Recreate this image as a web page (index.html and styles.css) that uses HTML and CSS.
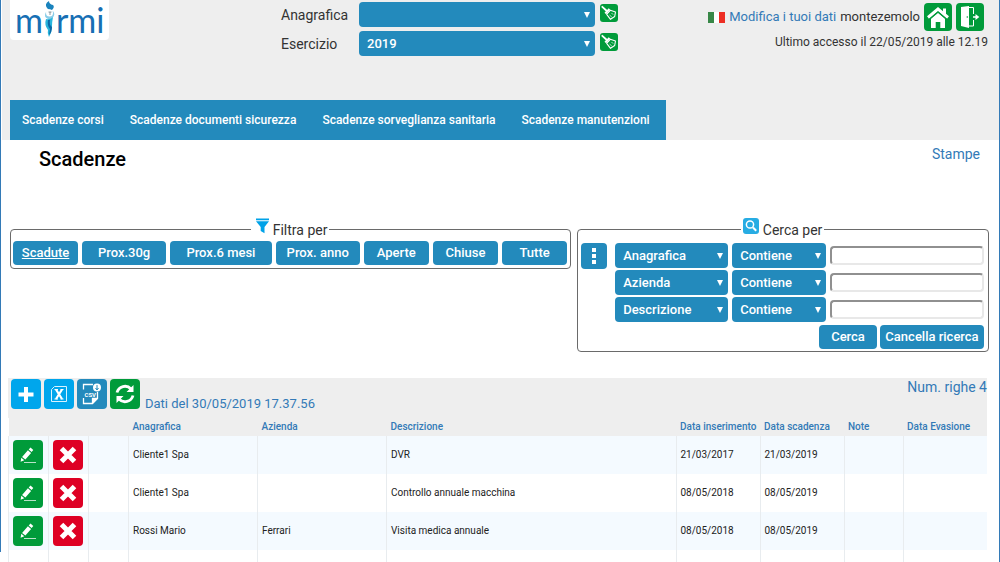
FILE: index.html
```html
<!DOCTYPE html>
<html lang="it">
<head>
<meta charset="utf-8">
<title>Scadenze</title>
<link rel="stylesheet" href="styles.css">
</head>
<body>
<svg class="sprite" aria-hidden="true">
  <symbol id="broom" viewBox="0 0 18 18"><path d="M2.300 2.800l4 3.700" fill="none" stroke="#fff" stroke-width="1.800" stroke-linecap="round"/><path d="M8.700 4.300l1.600 1.500-4.200 4.400-1.600-1.500z" fill="#fff"/><path d="M10.300 6.300l5.200 1.700-.8 4.500-4.200 2.800-3.800-5z" fill="none" stroke="#fff" stroke-width="1.100" stroke-linejoin="round"/><path d="M9.500 11l2.300 2M11.500 9l1.700 1.700" fill="none" stroke="#fff" stroke-width=".7"/></symbol>
  <symbol id="pencil" viewBox="0 0 30 30"><path d="M17.500 7.500l2.800 2.500-1.700 2-2.900-2.500zM14.900 10.200l3.200 2.700-5.700 6.700-3.300-2.700zM8.300 17.700l3 2.600-3.700 1.500z" fill="#fff"/><path d="M11 22.500h12" stroke="#b9e3c8"/></symbol>
  <symbol id="cross" viewBox="0 0 30 30"><path d="M8.500 8.500l13 13M21.500 8.500l-13 13" stroke="#fff" stroke-width="5"/></symbol>
</svg>
<div class="page">
  <header class="header">
    <div class="header-top">
      <div class="logo" aria-label="mirmi"><span>m</span><svg width="13" height="38" viewBox="0 0 13 38"><path d="M4 8Q1 4 6 1q0 3 4 4 2 2-1 5L5 9z" fill="#1a83bd"/><path d="M3 12Q0 17 5 19l2 2 2-3q4-3 1-7z" fill="#8acde8"/><circle cx="6.500" cy="13" r="3.500" fill="#fff"/><path d="M5.500 12h3M7 12v3" stroke="#596d78" stroke-width=".7"/><path d="M3 19q4 1 7-2-1 5-1 9 0 6-3 11-2-4-1-7-4-5-2-11z" fill="#28b4dc"/><path d="M5 20q-1 6 2 9l-1 6q3-3 3-8-3-2-2-7z" fill="#0b69a7"/></svg><span>rmi</span></div>
      <form class="context">
        <label for="anagrafica">Anagrafica</label>
        <select id="anagrafica" class="select"><option></option></select>
        <button type="button" class="clear" aria-label="Pulisci anagrafica"><svg width="18" height="18"><use href="#broom"/></svg></button>
        <label for="esercizio">Esercizio</label>
        <select id="esercizio" class="select"><option>2019</option></select>
        <button type="button" class="clear" aria-label="Pulisci esercizio"><svg width="18" height="18"><use href="#broom"/></svg></button>
      </form>
      <div class="account">
        <div class="account-row">
          <span class="flag"></span>
          <a href="#">Modifica i tuoi dati</a>
          <span>montezemolo</span>
          <button type="button" class="square green" aria-label="Home"><svg width="28" height="28" viewBox="0 0 28 28"><path d="M4 14.500L14 6l10 8.500" fill="none" stroke="#fff" stroke-width="3"/><path d="M19 5.500h3V12l-3-2.500zM7 15.500L14 9.700l7 5.800V25h-4.700v-6h-4.600v6H7z" fill="#fff"/><path d="M5.500 16.200L14 9l8.500 7.200" fill="none" stroke="#009b3a" stroke-width="1.200"/></svg></button>
          <button type="button" class="square green" aria-label="Esci"><svg width="28" height="28" viewBox="0 0 28 28"><path d="M5 4l8-1v22l-8-2z" fill="#fff"/><path d="M13 4.500h4.500V11M17.500 17v6H13" fill="none" stroke="#fff"/><path d="M17 13.200h2.500V11l3.800 3-3.800 3v-2.200H17z" fill="#fff"/><circle cx="11.300" cy="14" r=".8" fill="#009b3a"/></svg></button>
        </div>
        <div class="access">Ultimo accesso il 22/05/2019 alle 12.19</div>
      </div>
    </div>
    <nav class="nav">
      <a href="#">Scadenze corsi</a>
      <a href="#">Scadenze documenti sicurezza</a>
      <a href="#">Scadenze sorveglianza sanitaria</a>
      <a href="#">Scadenze manutenzioni</a>
    </nav>
  </header>
  <main>
    <div class="title-row"><h1>Scadenze</h1><a href="#">Stampe</a></div>
    <div class="panels">
      <fieldset class="panel filter">
        <legend><svg width="13" height="16" viewBox="0 0 13 16"><path d="M0 .5h13v1.800H0zM0 3.300h13L8.500 9v6.200L4.700 13V9z" fill="#00a2e8"/></svg>Filtra per</legend>
        <div class="filters">
          <button type="button" class="btn active">Scadute</button>
          <button type="button" class="btn wide">Prox.30g</button>
          <button type="button" class="btn widest">Prox.6 mesi</button>
          <button type="button" class="btn wide">Prox. anno</button>
          <button type="button" class="btn">Aperte</button>
          <button type="button" class="btn">Chiuse</button>
          <button type="button" class="btn">Tutte</button>
        </div>
      </fieldset>
      <fieldset class="panel search">
        <legend><svg width="16" height="16" viewBox="0 0 16 16"><rect width="16" height="16" rx="3" fill="#27ace3"/><circle cx="7" cy="6.500" r="3.600" fill="none" stroke="#fff" stroke-width="1.500"/><path d="M10 9.500l3.200 3.300" stroke="#fff" stroke-width="2"/></svg>Cerca per</legend>
        <div class="search-body">
          <button type="button" class="more" aria-label="Altri criteri"><svg width="26" height="26" viewBox="0 0 26 26"><path d="M11 5h4v4h-4zM11 11h4v4h-4zM11 17h4v4h-4z" fill="#fff"/></svg></button>
          <div class="criteria">
            <select class="select" aria-label="Campo 1"><option>Anagrafica</option></select>
            <select class="select" aria-label="Operatore 1"><option>Contiene</option></select>
            <input type="text" aria-label="Valore 1">
            <select class="select" aria-label="Campo 2"><option>Azienda</option></select>
            <select class="select" aria-label="Operatore 2"><option>Contiene</option></select>
            <input type="text" aria-label="Valore 2">
            <select class="select" aria-label="Campo 3"><option>Descrizione</option></select>
            <select class="select" aria-label="Operatore 3"><option>Contiene</option></select>
            <input type="text" aria-label="Valore 3">
          </div>
        </div>
        <div class="actions"><button type="button" class="btn short">Cerca</button><button type="button" class="btn long">Cancella ricerca</button></div>
      </fieldset>
    </div>
    <section class="results">
      <div class="toolbar">
        <button type="button" class="tool sky" aria-label="Aggiungi"><svg width="30" height="30" viewBox="0 0 30 30"><path d="M15 8v15M7.500 15.500h15" stroke="#fff" stroke-width="4"/></svg></button>
        <button type="button" class="tool sky" aria-label="Esporta Excel"><svg width="30" height="30" viewBox="0 0 30 30"><path d="M10.500 7.500h12v15h-15v-12z" fill="none" stroke="#d8f2ff"/><path d="M12 10.500l6 9.500M18 10.500L12 20" stroke="#fff" stroke-width="2.200"/><path d="M10.500 10.500h3.500M16.500 10.500h3M10.500 20h3.500M16.500 20h3" stroke="#fff"/></svg></button>
        <button type="button" class="tool blue" aria-label="Esporta CSV"><svg width="30" height="30" viewBox="0 0 30 30"><path d="M16 5.500H6.500v5M6.500 19v5.500h9l5-5V13M15.500 24v-4.500h5" fill="none" stroke="#fff" stroke-width="1.300"/><path d="M15.500 19.500h5l-5 5z" fill="#fff"/><circle cx="20" cy="8.500" r="4" fill="#fff"/><path d="M20 6v4.500M18.500 9l1.500 2 1.500-2" stroke="#238abc" fill="none"/><text x="7.500" y="17.500" class="csv">CSV</text></svg></button>
        <button type="button" class="tool green" aria-label="Aggiorna"><svg width="30" height="30" viewBox="0 0 30 30"><g fill="none" stroke="#fff" stroke-width="2.800"><path d="M7 13.500a8.200 8.200 0 0 1 14-3.500"/><path d="M23 16.500a8.200 8.200 0 0 1-14 3.500"/></g><path d="M23.500 6v7h-7zM6.500 24v-7h7z" fill="#fff"/></svg></button>
        <span class="stamp">Dati del 30/05/2019 17.37.56</span>
        <span class="count">Num. righe 4</span>
      </div>
      <table>
        <colgroup><col class="c-action"><col class="c-action"><col class="c-action"><col class="c-name"><col class="c-name"><col><col class="c-date"><col class="c-date"><col class="c-note"><col class="c-date"></colgroup>
        <thead><tr><th></th><th></th><th></th><th>Anagrafica</th><th>Azienda</th><th>Descrizione</th><th>Data inserimento</th><th>Data scadenza</th><th>Note</th><th>Data Evasione</th></tr></thead>
        <tbody>
          <tr><td><button type="button" class="tool green" aria-label="Modifica"><svg width="30" height="30"><use href="#pencil"/></svg></button></td><td><button type="button" class="tool red" aria-label="Elimina"><svg width="30" height="30"><use href="#cross"/></svg></button></td><td></td><td>Cliente1 Spa</td><td></td><td>DVR</td><td>21/03/2017</td><td>21/03/2019</td><td></td><td></td></tr>
          <tr><td><button type="button" class="tool green" aria-label="Modifica"><svg width="30" height="30"><use href="#pencil"/></svg></button></td><td><button type="button" class="tool red" aria-label="Elimina"><svg width="30" height="30"><use href="#cross"/></svg></button></td><td></td><td>Cliente1 Spa</td><td></td><td>Controllo annuale macchina</td><td>08/05/2018</td><td>08/05/2019</td><td></td><td></td></tr>
          <tr><td><button type="button" class="tool green" aria-label="Modifica"><svg width="30" height="30"><use href="#pencil"/></svg></button></td><td><button type="button" class="tool red" aria-label="Elimina"><svg width="30" height="30"><use href="#cross"/></svg></button></td><td></td><td>Rossi Mario</td><td>Ferrari</td><td>Visita medica annuale</td><td>08/05/2018</td><td>08/05/2019</td><td></td><td></td></tr>
          <tr class="spacer"><td></td><td></td><td></td><td></td><td></td><td></td><td></td><td></td><td></td><td></td></tr>
        </tbody>
      </table>
    </section>
  </main>
</div>
</body>
</html>
```
FILE: styles.css
```css
* { box-sizing: border-box; }
body { margin: 0; background: #fff; color: #333; font: 14px/18px Roboto, "Liberation Sans", sans-serif; }
a { color: #337ab7; text-decoration: none; }
button, select, input { font: inherit; margin: 0; }
button { border: 0; padding: 0; cursor: pointer; }
svg { display: block; }
.sprite { position: absolute; width: 0; height: 0; }
.page { border-right: 1px solid #337ab7; padding-left: 2px; background: linear-gradient(#337ab7, #337ab7) 0 0 / 1px calc(100% - 10px) no-repeat; }

.header { background: #eee; }
.header-top { display: flex; align-items: flex-start; min-height: 100px; padding: 0 11px 0 8px; }
.logo { display: flex; width: 99px; height: 40px; padding-left: 5px; background: #fff; border-radius: 0 0 4px 4px; color: #176fb4; font: 34px/40px Lato, sans-serif; }
.context { display: grid; grid-template-columns: 78px 236px 18px; row-gap: 4px; align-items: center; margin: 2px 0 0 172px; }
.clear { width: 18px; height: 18px; margin: 0 0 3px 5px; border-radius: 3px; background: #009b3a; }
.select { appearance: none; height: 25px; padding: 0 8px; border: 0; border-radius: 4px; color: #fff; font-size: 13px; font-weight: 500; background: #238abc url("data:image/svg+xml,%3Csvg xmlns='http://www.w3.org/2000/svg' width='6' height='6'%3E%3Cpath d='M0 0h6L3 6z' fill='white'/%3E%3C/svg%3E") no-repeat right 5px center; }
.account { display: flex; flex-direction: column; align-items: flex-end; margin-left: auto; padding-top: 3px; }
.account-row { display: flex; align-items: center; gap: 4px; padding-right: 4px; font-size: 13px; }
.flag { width: 17px; height: 11px; background: linear-gradient(90deg, #388747 0 33%, #fff 33% 66%, #ed2e24 66%); }
.square { width: 28px; height: 28px; border-radius: 4px; }
.green { background: #009b3a; }
.red { background: #de0024; }
.sky { background: #00a6ec; }
.blue { background: #238abc; }
.access { margin-top: 2px; font-size: 12px; }
.nav { display: flex; gap: 26px; width: fit-content; height: 40px; margin-left: 8px; padding: 0 16px 0 12px; align-items: center; background: #238abc; font-size: 12px; font-weight: 500; }
.nav a { color: #fff; }

.title-row { display: flex; justify-content: space-between; align-items: flex-start; height: 78px; padding: 5px 19px 0 37px; }
h1 { margin: 2px 0 0; color: #000; font-size: 20px; line-height: 24px; font-weight: 500; }
.panels { display: flex; align-items: flex-start; gap: 6px; padding: 0 10px 0 8px; }
.panel { min-width: 0; margin: 0; padding: 0 3px 3px 2px; border: 1px solid #6a6a6a; border-radius: 4px; }
.filter { flex: 563; }
.search { flex: 410; padding: 0 4px 2px 3px; }
.filter { flex-grow: 564; }
legend { display: flex; gap: 4px; height: 23px; margin: 0 auto; padding: 0 2px; align-items: flex-end; font-size: 14px; line-height: 22px; }
.filter legend { padding-left: 5px; }
legend svg { align-self: flex-start; }
.filters { display: flex; gap: 4px; }
.btn { flex: 66; height: 24px; border-radius: 4px; background: #238abc; color: #fff; font-size: 13px; font-weight: 500; white-space: nowrap; }
.btn.wide { flex: 85; }
.btn.widest { flex: 103; }
.active { text-decoration: underline; }
.search-body { display: flex; align-items: flex-start; gap: 8px; padding-top: 2px; }
.more { width: 26px; height: 26px; border-radius: 4px; background: #238abc; }
.criteria { flex: 1; display: grid; grid-template-columns: 113px 94px 1fr; column-gap: 4px; row-gap: 2px; align-items: center; }
.criteria input { width: 100%; min-width: 0; height: 19px; border: 2px solid; border-color: #909090 #e8e8e8 #e8e8e8 #909090; border-radius: 4px; background: #fff; }
.actions { display: flex; justify-content: flex-end; gap: 3px; padding-top: 3px; }
.btn.short { flex: 0 0 58px; }
.btn.long { flex: 0 0 104px; }

.results { margin: 26px 12px 0 6px; }
.toolbar { display: flex; gap: 3px; height: 40px; padding: 0 0 0 3px; background: #eee; }
.tool { display: block; width: 30px; height: 30px; border-radius: 4px; }
.toolbar .tool { margin-top: 1px; }
.csv { fill: #fff; font: bold 6px Roboto, sans-serif; }
.stamp, .count { color: #337ab7; }
.stamp { margin-top: 17px; padding-left: 2px; font-size: 13px; }
.count { margin-left: auto; }
table { width: 100%; table-layout: fixed; border-collapse: collapse; font-size: 10px; line-height: 14px; }
th { height: 18px; padding: 0 0 0 4px; background: #eee; color: #337ab7; text-align: left; font-weight: 500; white-space: nowrap; }
td { height: 38px; padding: 0 0 0 4px; border-left: 1px solid #e8ecef; color: #222; }
tbody tr:nth-child(odd) { background: #f4faff; }
tbody tr.spacer, tbody tr:nth-child(even) { background: #fff; }
.spacer td { height: 12px; }
.c-action { width: 40px; }
.c-name { width: 129px; }
.c-date { width: 84px; }
.c-note { width: 59px; }
```
